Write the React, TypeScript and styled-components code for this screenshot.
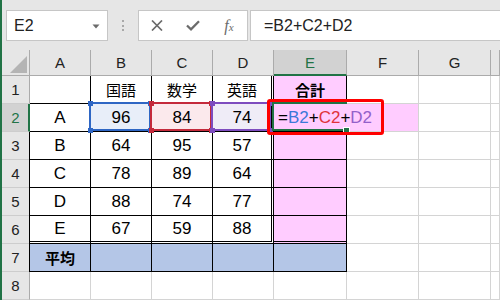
import React from 'react';
import styled, { createGlobalStyle, css } from 'styled-components';

const GlobalStyle = createGlobalStyle`
  html, body { margin: 0; padding: 0; background: #e6e6e6; }
  body { font-family: "Liberation Sans", "Noto Sans CJK JP", sans-serif; overflow: hidden; }
`;

const GREEN = '#217346';
const BLACK = '1px solid #000';
const DOUBLE = '3px double #000';
const GRID = '1px solid #d4d4d4';
const PINK = '#ffccff';
const BLUE_ROW = '#b4c6e7';

const Window = styled.div`
  width: 500px;
  height: 300px;
  overflow: hidden;
  box-sizing: border-box;
  border-left: 2px solid ${GREEN};
  background: #e6e6e6;
  display: flex;
  flex-direction: column;
`;

const FormulaBar = styled.div`
  height: 50px;
  flex: none;
  box-sizing: border-box;
  padding: 10px 0 9px 4px;
  display: flex;
  align-items: stretch;
`;

const NameBox = styled.div`
  width: 102px;
  box-sizing: border-box;
  background: #fff;
  border: 1px solid #c6c6c6;
  display: flex;
  align-items: center;
  justify-content: space-between;
  padding: 1px 7px 0 7px;
  font-size: 16px;
  color: #222;
`;

const Grip = styled.div`
  width: 30px;
  display: flex;
  flex-direction: column;
  align-items: center;
  justify-content: center;
  gap: 2.5px;
`;

const Dot = styled.span`
  width: 2px;
  height: 2px;
  background: #a8a8a8;
`;

const FxBox = styled.div`
  width: 110px;
  box-sizing: border-box;
  background: #fff;
  border: 1px solid #c6c6c6;
  display: flex;
`;

const FxSlot = styled.div`
  flex: 1;
  display: flex;
  align-items: center;
  justify-content: center;
`;

const FxGlyph = styled.span`
  font-family: "Liberation Serif", serif;
  font-style: italic;
  font-size: 16px;
  color: #6b6b6b;
  & small { font-size: 11px; }
`;

const FormulaInput = styled.div`
  flex: 1;
  margin-left: 2px;
  margin-right: -6px;
  box-sizing: border-box;
  background: #fff;
  border: 1px solid #c6c6c6;
  display: flex;
  align-items: center;
  padding: 1px 0 0 13px;
  font-size: 16px;
  color: #222;
`;

const Sheet = styled.div`
  flex: 1;
  display: grid;
  grid-template-columns: 28px 61px 61px 61px 61px 73px 72px 72px 1fr;
  grid-template-rows: 26px repeat(8, 28px);
  background: #fff;
`;

const Corner = styled.div`
  box-sizing: border-box;
  background: #e6e6e6;
  border-right: 1px solid #ababab;
  border-bottom: 1px solid #ababab;
  display: flex;
  align-items: flex-end;
  justify-content: flex-end;
  padding: 0 2px 2px 0;
`;

const ColHeader = styled.div<{ $active?: boolean }>`
  box-sizing: border-box;
  background: ${p => (p.$active ? '#d2d2d2' : '#e6e6e6')};
  border-right: 1px solid #ababab;
  border-bottom: ${p => (p.$active ? `2px solid ${GREEN}` : '1px solid #ababab')};
  color: ${p => (p.$active ? GREEN : '#222')};
  font-size: 15px;
  display: flex;
  align-items: center;
  justify-content: center;
  padding-top: ${p => (p.$active ? '1px' : '0')};
`;

const RowHeader = styled.div<{ $active?: boolean }>`
  box-sizing: border-box;
  background: ${p => (p.$active ? '#d2d2d2' : '#e6e6e6')};
  border-right: ${p => (p.$active ? `2px solid ${GREEN}` : '1px solid #ababab')};
  border-bottom: 1px solid #cdcdcd;
  color: ${p => (p.$active ? GREEN : '#222')};
  font-size: 15px;
  display: flex;
  align-items: center;
  justify-content: center;
  padding-left: ${p => (p.$active ? '1px' : '0')};
`;

interface CellProps {
  $fill?: string;
  $right?: string;
  $bottom?: string;
  $bold?: boolean;
  $left?: boolean;
  $lead?: boolean;
  $layer?: number;
}

const Cell = styled.div<CellProps>`
  position: relative;
  box-sizing: border-box;
  display: flex;
  align-items: center;
  justify-content: ${p => (p.$left ? 'flex-start' : 'center')};
  padding: ${p => (p.$left ? '0 0 0 4px' : '0')};
  background: ${p => p.$fill ?? '#fff'};
  border-right: ${p => p.$right ?? GRID};
  border-bottom: ${p => p.$bottom ?? GRID};
  font-size: 17px;
  color: #000;
  font-weight: ${p => (p.$bold ? 700 : 400)};
  white-space: nowrap;
  ${p => p.$lead && css`box-shadow: -1px 0 0 #000;`}
  ${p => p.$layer && css`z-index: ${p.$layer};`}
`;

const Jp = styled.span`
  font-family: "Noto Sans CJK JP", sans-serif;
  font-size: 15px;
`;

const RefFrame = styled.div<{ $color: string }>`
  position: absolute;
  left: -2px;
  top: -2px;
  right: 0;
  bottom: 0;
  border: 2px solid ${p => p.$color};
  pointer-events: none;
`;

const Handle = styled.span<{ $color: string; $x: 'left' | 'right'; $y: 'top' | 'bottom' }>`
  position: absolute;
  width: 5px;
  height: 5px;
  background: ${p => p.$color};
  ${p => p.$x}: -3.5px;
  ${p => p.$y}: -3.5px;
`;

const ActiveFrame = styled.div`
  position: absolute;
  left: -2px;
  top: -2px;
  right: -1px;
  bottom: 0;
  border: 2px solid ${GREEN};
  border-right: none;
  pointer-events: none;
`;

const FillHandle = styled.span`
  position: absolute;
  right: -3px;
  bottom: -5px;
  width: 7px;
  height: 7px;
  box-sizing: border-box;
  background: ${GREEN};
  border: 1px solid #fff;
`;

const Callout = styled.div`
  position: absolute;
  left: -7px;
  top: -5px;
  width: 117px;
  height: 36px;
  box-sizing: border-box;
  border: 3px solid #f00;
  border-radius: 3px;
  z-index: 3;
  pointer-events: none;
`;

const FormulaText = styled.span`
  position: relative;
  z-index: 1;
  color: #000;
`;

const RefText = styled.span<{ $color: string }>`
  color: ${p => p.$color};
`;

const columns = ['A', 'B', 'C', 'D', 'E', 'F', 'G', ''];

const data: string[][] = [
  ['', '国語', '数学', '英語', '合計'],
  ['A', '96', '84', '74', ''],
  ['B', '64', '95', '57', ''],
  ['C', '78', '89', '64', ''],
  ['D', '88', '74', '77', ''],
  ['E', '67', '59', '88', ''],
  ['平均', '', '', '', ''],
  ['', '', '', '', ''],
];

const refs: Record<string, { color: string; fill: string }> = {
  '2-1': { color: '#2e66c4', fill: '#e8eef9' },
  '2-2': { color: '#c42a3b', fill: '#fbe9ec' },
  '2-3': { color: '#7e4cbf', fill: '#efecf7' },
};

const isJp = (s: string) => /[\u3000-\u9fff]/.test(s);

function renderCell(r: number, c: number) {
  const inTable = r <= 7 && c <= 4;
  const text = c <= 4 ? data[r - 1][c] : '';
  let right = inTable ? BLACK : GRID;
  let bottom = inTable ? BLACK : GRID;
  if (c === 3 && r <= 6) right = DOUBLE;
  if (inTable && r === 6) bottom = DOUBLE;
  let fill: string | undefined;
  if (c === 4 && r <= 6) fill = PINK;
  if (r === 7 && c <= 4) fill = BLUE_ROW;
  if (r === 2 && c === 5) fill = PINK;
  const ref = refs[`${r}-${c}`];
  if (ref) fill = ref.fill;
  const bold = (r === 1 && c === 4) || (r === 7 && c === 0);
  const key = `${r}-${c}`;

  if (r === 2 && c === 4) {
    return (
      <Cell key={key} $fill={fill} $right={`1px solid ${PINK}`} $bottom={bottom} $left $layer={2}>
        <FormulaText>
          =<RefText $color="#3b78d8">B2</RefText>+<RefText $color="#e0323a">C2</RefText>+
          <RefText $color="#9360c9">D2</RefText>
        </FormulaText>
        <ActiveFrame>
          <FillHandle />
        </ActiveFrame>
        <Callout />
      </Cell>
    );
  }

  return (
    <Cell
      key={key}
      $fill={fill}
      $right={right}
      $bottom={bottom}
      $bold={bold}
      $lead={inTable && c === 0 && r >= 3}
      $layer={ref ? 1 : undefined}
    >
      {text && (isJp(text) ? <Jp>{text}</Jp> : text)}
      {ref && (
        <RefFrame $color={ref.color}>
          <Handle $color={ref.color} $x="left" $y="top" />
          <Handle $color={ref.color} $x="right" $y="top" />
          <Handle $color={ref.color} $x="left" $y="bottom" />
          <Handle $color={ref.color} $x="right" $y="bottom" />
        </RefFrame>
      )}
    </Cell>
  );
}

export default function App() {
  return (
    <>
      <GlobalStyle />
      <Window>
        <FormulaBar>
          <NameBox>
            <span>E2</span>
            <svg width="8" height="5" viewBox="0 0 8 5">
              <path d="M0.5 0.5H7.5L4 4.5Z" fill="#6b6b6b" />
            </svg>
          </NameBox>
          <Grip>
            <Dot />
            <Dot />
            <Dot />
          </Grip>
          <FxBox>
            <FxSlot>
              <svg width="12" height="11" viewBox="0 0 12 11">
                <path d="M1 0.5L11 10.5M11 0.5L1 10.5" stroke="#6b6b6b" strokeWidth="1.7" />
              </svg>
            </FxSlot>
            <FxSlot>
              <svg width="14" height="11" viewBox="0 0 14 11">
                <path d="M1 5.5L5 9.3L13 1.3" stroke="#6b6b6b" strokeWidth="2.3" fill="none" />
              </svg>
            </FxSlot>
            <FxSlot>
              <FxGlyph>
                f<small>x</small>
              </FxGlyph>
            </FxSlot>
          </FxBox>
          <FormulaInput>=B2+C2+D2</FormulaInput>
        </FormulaBar>
        <Sheet>
          <Corner>
            <svg width="17" height="17" viewBox="0 0 17 17">
              <path d="M17 0V17H0Z" fill="#b4b4b4" />
            </svg>
          </Corner>
          {columns.map(col => (
            <ColHeader key={`h-${col}`} $active={col === 'E'}>
              {col}
            </ColHeader>
          ))}
          {Array.from({ length: 8 }, (_, i) => i + 1).map(r => (
            <React.Fragment key={`r-${r}`}>
              <RowHeader $active={r === 2}>{r}</RowHeader>
              {Array.from({ length: 8 }, (_, c) => renderCell(r, c))}
            </React.Fragment>
          ))}
        </Sheet>
      </Window>
    </>
  );
}
